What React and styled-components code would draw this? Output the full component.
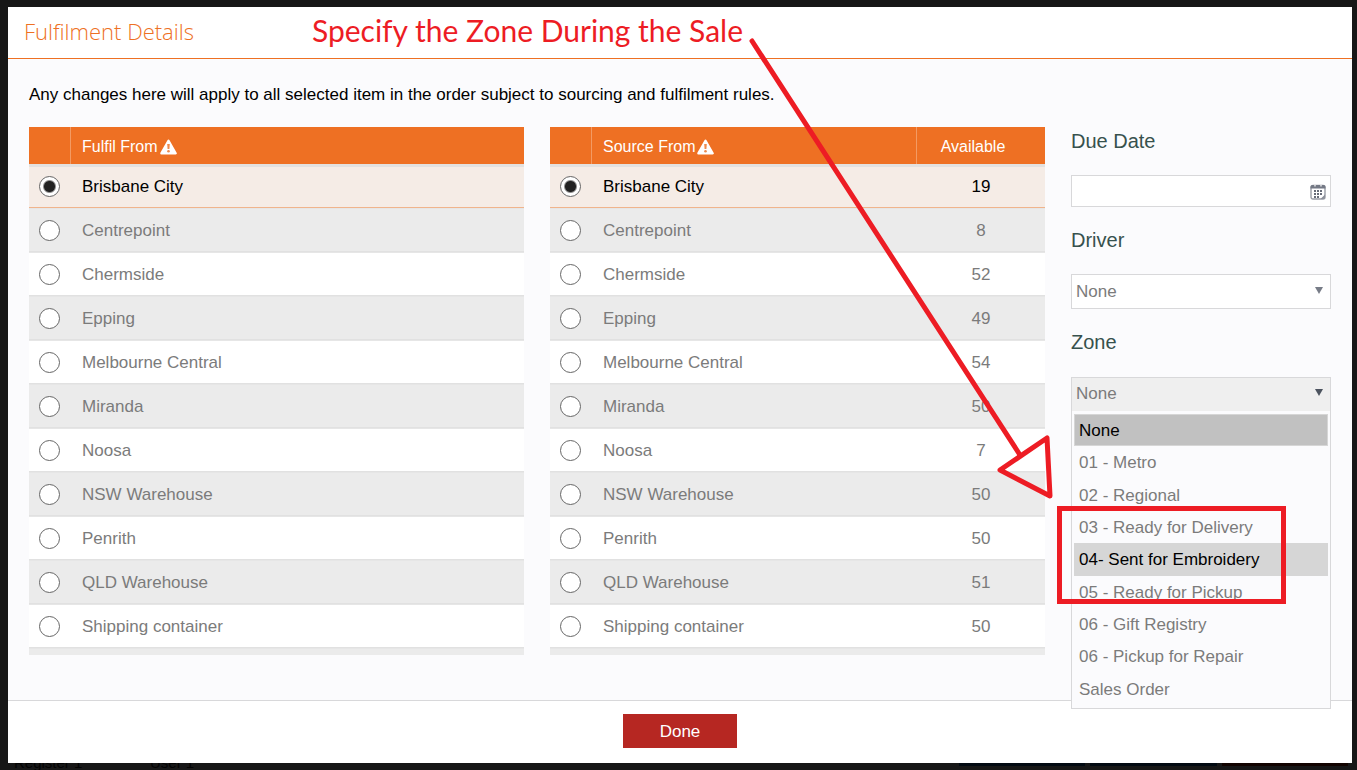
import { useState } from "react";
import styled, { createGlobalStyle } from "styled-components";

const GlobalStyle = createGlobalStyle`
  * {
    box-sizing: border-box;
  }

  body {
    margin: 0;
    background: #171717;
    color: #000;
    font-family: "Liberation Sans", Arial, sans-serif;
    font-size: 17px;
    line-height: 20px;
  }
`;

const Page = styled.div`
  position: relative;
  min-height: 100vh;
  padding: 7px 5px 0 8px;
  display: flex;
  flex-direction: column;
`;

const Modal = styled.main`
  flex: 1;
  display: flex;
  flex-direction: column;
  background: #fbfbfd;
`;

const Header = styled.header`
  display: flex;
  align-items: center;
  gap: 118px;
  height: 52px;
  padding: 0 16px 4px;
  background: #fff;
  border-bottom: 1px solid #ee7023;
`;

const Title = styled.h1`
  margin: 0;
  color: #ee7023;
  font-family: "Open Sans", sans-serif;
  font-size: 22px;
  font-weight: 300;
  line-height: 30px;
  white-space: nowrap;
`;

const Callout = styled.p`
  margin: 0;
  padding-bottom: 2px;
  color: #ed1c24;
  font-family: Lato, sans-serif;
  font-size: 30px;
  line-height: 36px;
  white-space: nowrap;
`;

const Body = styled.div`
  flex: 1;
  padding: 26px 21px 0;
`;

const Intro = styled.p`
  margin: 0 0 22px;
`;

const Columns = styled.div`
  display: grid;
  grid-template-columns: 1fr 1fr 260px;
  align-items: start;
  gap: 26px;
`;

const Table = styled.table`
  width: 100%;
  table-layout: fixed;
  border-collapse: separate;
  border-spacing: 0;
`;

const HeadCell = styled.th`
  width: ${({ $width }) => ($width ? `${$width}px` : "auto")};
  height: 37px;
  padding: ${({ $center }) => ($center ? "2px 16px 0 0" : "2px 11px 0")};
  background: #ee7023;
  border-left: ${({ $first }) => ($first ? "none" : "1px solid #f39a63")};
  color: #fff;
  font-size: 16px;
  font-weight: 400;
  text-align: ${({ $center }) => ($center ? "center" : "left")};
  white-space: nowrap;

  svg {
    margin-left: 2px;
    vertical-align: -3px;
  }
`;

const Row = styled.tr`
  color: ${({ $selected }) => ($selected ? "#000" : "#7b7b7b")};
  background: ${({ $selected, $striped }) =>
    $selected ? "#f5ece6" : $striped ? "#ebebeb" : "#fff"};

  td {
    height: 44px;
    padding: 2px 11px 0 12px;
    border-bottom: 1px solid ${({ $selected }) => ($selected ? "#f0b48c" : "#e1e1e1")};
    box-shadow: inset 0 1px 0 #e6e6e6;
  }

  &:first-child td {
    box-shadow: inset 0 3px 0 #e3e1df;
  }
`;

const RadioCell = styled.td`
  && {
    padding: 2px 0 0 10px;
  }
`;

const NumberCell = styled.td`
  text-align: center;
`;

const CutRow = styled.tr`
  td {
    height: 7px;
    padding: 0;
    background: #ebebeb;
    box-shadow: inset 0 1px 0 #e6e6e6;
  }
`;

const Radio = styled.input`
  appearance: none;
  display: block;
  width: 21px;
  height: 21px;
  margin: 0;
  border: 1px solid #666;
  border-radius: 50%;
  background: #fff;
  cursor: pointer;

  &:checked {
    background: radial-gradient(circle, #222 5px, #fff 7px);
  }
`;

const Fields = styled.div`
  display: flex;
  flex-direction: column;
`;

const Label = styled.label`
  margin: ${({ $first }) => ($first ? "4px 0 24px" : "23px 0 24px")};
  color: #37514d;
  font-size: 20px;
  line-height: 20px;
`;

const ZoneLabel = styled(Label)`
  margin-bottom: 25px;
`;

const Control = styled.div`
  position: relative;
`;

const DateInput = styled.input`
  display: block;
  width: 100%;
  height: 32px;
  padding: 0 34px 0 4px;
  border: 1px solid #d8d8da;
  background: #fff;
  font: inherit;
`;

const CalendarButton = styled.button`
  position: absolute;
  top: 9px;
  right: 5px;
  padding: 0;
  border: 0;
  background: none;
  line-height: 0;
  cursor: pointer;
`;

const Select = styled.select`
  appearance: none;
  display: block;
  width: 100%;
  height: 35px;
  padding: 0 30px 0 4px;
  border: 1px solid #d8d8da;
  border-bottom-color: ${({ $open }) => ($open ? "#fbfbfd" : "#d8d8da")};
  border-radius: 0;
  background: ${({ $open }) => ($open ? "#efefef" : "#fff")};
  color: #7b7b7b;
  font: inherit;
`;

const ZoneSelect = styled(Select)`
  padding-bottom: 2px;
`;

const Caret = styled.span`
  position: absolute;
  top: ${({ $dark }) => ($dark ? "12px" : "13px")};
  right: 8px;
  border: 4px solid transparent;
  border-top: 7px solid ${({ $dark }) => ($dark ? "#4c535f" : "#777c87")};
  border-bottom: 0;
  pointer-events: none;
`;

const Menu = styled.ul`
  position: absolute;
  top: 34px;
  left: 0;
  right: 0;
  z-index: 1;
  display: grid;
  grid-auto-rows: 1fr;
  height: 298px;
  margin: 0;
  padding: 3px 2px;
  list-style: none;
  background: #fbfbfd;
  border: 1px solid #d8d8da;
  border-top: 0;
`;

const Option = styled.li`
  display: flex;
  align-items: center;
  padding: 2px 4px 0;
  border: 1px solid ${({ $selected, $active }) =>
    $selected || $active ? "#d6d6d6" : "transparent"};
  background: ${({ $selected, $active }) =>
    $selected ? "#c1c1c1" : $active ? "#d6d6d6" : "transparent"};
  color: ${({ $selected, $active }) => ($selected || $active ? "#000" : "#7b7b7b")};
  cursor: pointer;
`;

const Footer = styled.footer`
  display: flex;
  justify-content: center;
  height: 63px;
  padding-top: 13px;
  background: #fff;
  border-top: 1px solid #d8d8da;
`;

const DoneButton = styled.button`
  width: 114px;
  height: 34px;
  padding: 2px 0 0;
  border: 0;
  background: #b62722;
  color: #fff;
  font: inherit;
  cursor: pointer;
`;

const StatusBar = styled.div`
  display: flex;
  height: 7px;
  padding: 0 4px 0 6px;
  overflow: hidden;
  color: #030303;
  font-size: 15px;
  line-height: 0;
`;

const StatusItem = styled.span`
  width: 136px;
`;

const StatusBlocks = styled.div`
  display: flex;
  gap: 5px;
  width: 389px;
  margin-left: auto;
`;

const StatusBlock = styled.span`
  flex: 1;
  height: 3px;
  background: ${({ color }) => color};
`;

const Arrow = styled.svg`
  position: absolute;
  top: 0;
  left: 0;
  z-index: 2;
  overflow: visible;
  pointer-events: none;
`;

const Highlight = styled.div`
  position: absolute;
  top: 129px;
  left: -14px;
  z-index: 2;
  width: 229px;
  height: 98px;
  border: 5px solid #ed1c24;
  pointer-events: none;
`;

const stores = [
  ["Brisbane City", 19],
  ["Centrepoint", 8],
  ["Chermside", 52],
  ["Epping", 49],
  ["Melbourne Central", 54],
  ["Miranda", 50],
  ["Noosa", 7],
  ["NSW Warehouse", 50],
  ["Penrith", 50],
  ["QLD Warehouse", 51],
  ["Shipping container", 50],
];

const zones = [
  "None",
  "01 - Metro",
  "02 - Regional",
  "03 - Ready for Delivery",
  "04- Sent for Embroidery",
  "05 - Ready for Pickup",
  "06 - Gift Registry",
  "06 - Pickup for Repair",
  "Sales Order",
];

function WarningIcon() {
  return (
    <svg width="17" height="16" viewBox="0 0 17 16" aria-hidden="true">
      <path d="M8.5 1.8 15.6 14.3H1.4Z" fill="#fff" stroke="#fff" strokeWidth="2.4" strokeLinejoin="round" />
      <path d="M7.2 5h2.6l-.4 5H7.6Z" fill="#ee8a4d" />
      <circle cx="8.5" cy="12.2" r="1.3" fill="#ee8a4d" />
    </svg>
  );
}

function CalendarIcon() {
  const dots = [
    [4, 6], [7, 6], [10, 6],
    [4, 9], [7, 9], [10, 9],
    [4, 12], [7, 12],
  ];
  return (
    <svg width="16" height="16" viewBox="0 0 16 16" aria-hidden="true">
      <rect x="1" y="1.5" width="14" height="13.5" rx="2" fill="#fff" stroke="#9a9da6" strokeWidth="1.4" />
      <path d="M.5 4.6V3Q.5 1 2.5 1h11q2 0 2 2v1.6Z" fill="#747985" />
      <path d="M4.4 1h1.2v1.6H4.4ZM10.4 1h1.2v1.6h-1.2Z" fill="#fff" />
      <path d="M15 10.5V13q0 2-2 2h-2.5Z" fill="#8b8f99" />
      {dots.map(([x, y]) => (
        <rect key={`${x}-${y}`} x={x} y={y} width="2" height="2" fill="#686d79" />
      ))}
    </svg>
  );
}

function StoreTable({ name, title, showAvailable }) {
  const [selected, setSelected] = useState("Brisbane City");

  return (
    <Table>
      <thead>
        <tr>
          <HeadCell $width={41} $first aria-label="Select" />
          <HeadCell>
            {title}
            <WarningIcon />
          </HeadCell>
          {showAvailable && (
            <HeadCell $width={129} $center>
              Available
            </HeadCell>
          )}
        </tr>
      </thead>
      <tbody>
        {stores.map(([store, available], i) => (
          <Row key={store} $selected={store === selected} $striped={i % 2 === 1}>
            <RadioCell>
              <Radio
                type="radio"
                id={`${name}-${i}`}
                name={name}
                checked={store === selected}
                onChange={() => setSelected(store)}
              />
            </RadioCell>
            <td>
              <label htmlFor={`${name}-${i}`}>{store}</label>
            </td>
            {showAvailable && <NumberCell>{available}</NumberCell>}
          </Row>
        ))}
        <CutRow>
          <td colSpan={showAvailable ? 3 : 2} />
        </CutRow>
      </tbody>
    </Table>
  );
}

export default function App() {
  const [zone, setZone] = useState("None");
  const [active, setActive] = useState("04- Sent for Embroidery");

  return (
    <>
      <GlobalStyle />
      <Page>
        <Modal>
          <Header>
            <Title>Fulfilment Details</Title>
            <Callout>Specify the Zone During the Sale</Callout>
          </Header>
          <Body>
            <Intro>
              Any changes here will apply to all selected item in the order subject to sourcing and fulfilment rules.
            </Intro>
            <Columns>
              <StoreTable name="fulfil" title="Fulfil From" />
              <StoreTable name="source" title="Source From" showAvailable />
              <Fields>
                <Label $first htmlFor="due">Due Date</Label>
                <Control>
                  <DateInput id="due" type="text" />
                  <CalendarButton type="button" aria-label="Open calendar">
                    <CalendarIcon />
                  </CalendarButton>
                </Control>
                <Label htmlFor="driver">Driver</Label>
                <Control>
                  <Select id="driver">
                    <option>None</option>
                  </Select>
                  <Caret />
                </Control>
                <ZoneLabel htmlFor="zone">Zone</ZoneLabel>
                <Control>
                  <ZoneSelect id="zone" $open value={zone} onChange={(e) => setZone(e.target.value)}>
                    {zones.map((item) => (
                      <option key={item}>{item}</option>
                    ))}
                  </ZoneSelect>
                  <Caret $dark />
                  <Menu role="listbox" aria-label="Zone">
                    {zones.map((item) => (
                      <Option
                        key={item}
                        role="option"
                        aria-selected={item === zone}
                        $selected={item === zone}
                        $active={item === active}
                        onMouseEnter={() => setActive(item)}
                        onClick={() => setZone(item)}
                      >
                        {item}
                      </Option>
                    ))}
                  </Menu>
                  <Highlight />
                </Control>
              </Fields>
            </Columns>
          </Body>
          <Footer>
            <DoneButton type="button">Done</DoneButton>
          </Footer>
        </Modal>
        <StatusBar>
          <StatusItem>Register 1</StatusItem>
          <StatusItem>User 1</StatusItem>
          <StatusBlocks>
            <StatusBlock color="#020a12" />
            <StatusBlock color="#020a12" />
            <StatusBlock color="#120300" />
          </StatusBlocks>
        </StatusBar>
        <Arrow width="1357" height="770" fill="none" stroke="#ed1c24" strokeWidth="5" strokeLinecap="round" strokeLinejoin="round">
          <path d="M752 41 1020 455M1000 470 1047 438 1050 496Z" />
        </Arrow>
      </Page>
    </>
  );
}
